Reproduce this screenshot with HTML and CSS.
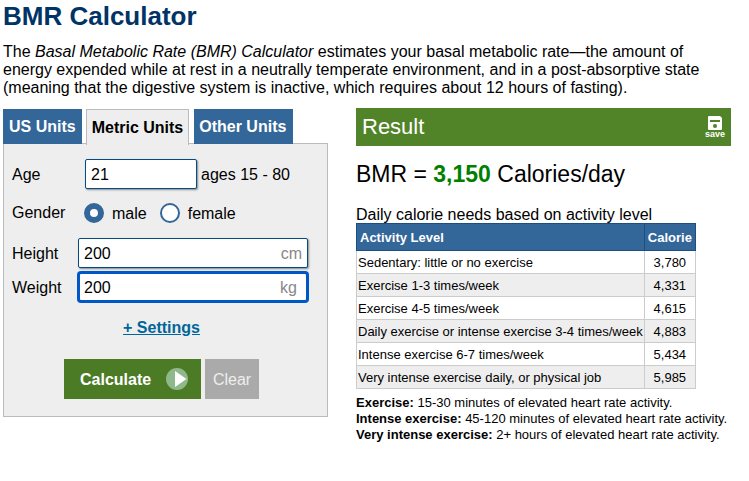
FILE: index.html
```html
<!DOCTYPE html>
<html>
<head>
    <title>BMR Calculator</title>
    <link rel="stylesheet" href="styles.css">
</head>
<body>
    <h1>BMR Calculator</h1>
    <p class="intro">The <i>Basal Metabolic Rate (BMR) Calculator</i> estimates your basal metabolic rate—the amount of energy expended while at rest in a neutrally temperate environment, and in a post-absorptive state (meaning that the digestive system is inactive, which requires about 12 hours of fasting).</p>

    <div class="columns">
        <!-- Calculator form -->
        <div class="calc">
            <div class="tabs">
                <a class="tab">US Units</a>
                <a class="tab active">Metric Units</a>
                <a class="tab">Other Units</a>
            </div>
            <div class="panel">
                <div class="row row-age">
                    <label>Age</label>
                    <div class="field field-age">21</div>
                    <span class="hint">ages 15 - 80</span>
                </div>
                <div class="row row-gender">
                    <label>Gender</label>
                    <span class="radio checked"></span><span class="radio-text">male</span>
                    <span class="radio"></span><span class="radio-text">female</span>
                </div>
                <div class="row row-height">
                    <label>Height</label>
                    <div class="field field-wide">200<span class="unit">cm</span></div>
                </div>
                <div class="row row-weight">
                    <label>Weight</label>
                    <div class="field field-wide focused">200<span class="unit">kg</span></div>
                </div>
                <div class="settings"><a>+ Settings</a></div>
                <div class="buttons">
                    <button class="btn-calc"><span>Calculate</span>
                        <svg width="22" height="22" viewBox="0 0 22 22"><circle cx="11" cy="11" r="11" fill="#8fb98a"/><path d="M9 3 L20.5 11 L9 19 Z" fill="#fff"/></svg>
                    </button>
                    <button class="btn-clear">Clear</button>
                </div>
            </div>
        </div>

        <!-- Result -->
        <div class="result">
            <div class="result-head">
                <span>Result</span>
                <div class="save">
                    <svg width="14" height="14" viewBox="0 0 14 14"><path d="M0 1 Q0 0 1 0 H12 L14 2 V13 Q14 14 13 14 H1 Q0 14 0 13 Z" fill="#fff"/><rect x="2" y="4" width="10" height="2" fill="#518428"/><circle cx="7" cy="10" r="2" fill="#518428"/></svg>
                    <span>save</span>
                </div>
            </div>
            <div class="bmr">BMR = <b>3,150</b> Calories/day</div>
            <div class="table-title">Daily calorie needs based on activity level</div>
            <table>
                <tr><th>Activity Level</th><th class="num">Calorie</th></tr>
                <tr><td>Sedentary: little or no exercise</td><td class="num">3,780</td></tr>
                <tr class="alt"><td>Exercise 1-3 times/week</td><td class="num">4,331</td></tr>
                <tr><td>Exercise 4-5 times/week</td><td class="num">4,615</td></tr>
                <tr class="alt"><td>Daily exercise or intense exercise 3-4 times/week</td><td class="num">4,883</td></tr>
                <tr><td>Intense exercise 6-7 times/week</td><td class="num">5,434</td></tr>
                <tr class="alt"><td>Very intense exercise daily, or physical job</td><td class="num">5,985</td></tr>
            </table>
            <div class="notes">
                <div><b>Exercise:</b> 15-30 minutes of elevated heart rate activity.</div>
                <div><b>Intense exercise:</b> 45-120 minutes of elevated heart rate activity.</div>
                <div><b>Very intense exercise:</b> 2+ hours of elevated heart rate activity.</div>
            </div>
        </div>
    </div>
</body>
</html>
```

FILE: styles.css
```css
body { margin: 0; padding: 0 3px; background: #fff; color: #000; font-family: "Liberation Sans", Arial, sans-serif; font-size: 16px; }

h1 { margin: 0; padding-top: 1px; font-size: 26px; line-height: 30px; color: #003366; }
.intro { width: 728px; margin: 12px 0 0; line-height: 18px; }

.columns { display: flex; gap: 28px; margin-top: 11px; }

.calc { width: 325px; flex: none; }
.tabs { display: flex; align-items: flex-start; gap: 4px; padding-top: 1px; margin-bottom: -2px; }
.tab { height: 35px; line-height: 35px; padding: 0 6px; background: #336699; color: #fff; font-weight: bold; font-size: 16px; }
.tab.active { box-sizing: border-box; height: 36px; padding: 0 5px; background: #eee; color: #000; border: 1px solid #bbb; border-bottom: 0; position: relative; z-index: 1; }
.tab:last-child { padding: 0 6px 0 5px; width: 88px; margin-left: 1px; }

.panel { box-sizing: border-box; height: 274px; padding: 15px 0 0 8px; background: #eee; border: 1px solid #bbb; }
.row { display: flex; align-items: center; }
.row label { width: 66px; flex: none; padding-top: 1px; }
.row-gender label { padding-top: 0; }
.field { box-sizing: border-box; height: 30px; line-height: 30px; padding-left: 5px; background: #fff; border: 1px solid #044b87; border-radius: 2px; box-shadow: 1px 1px 2px #888; position: relative; }
.field-age { width: 112px; margin-left: 7px; }
.hint { margin-left: 4px; padding-top: 1px; }
.row-gender { margin-top: 14px; height: 20px; }
.radio { box-sizing: border-box; width: 20px; height: 20px; border: 2px solid #336699; border-radius: 50%; background: #fff; }
.radio.checked { margin-left: 6px; border: 6px solid #336699; }
.radio + .radio-text { margin-left: 8px; padding-top: 1px; }
.radio-text + .radio { margin-left: 13px; }
.row-height { margin-top: 15px; }
.row-weight { margin-top: 4px; }
.field-wide { width: 230px; }
.field.focused { border: 2px solid #0057c8; border-radius: 3px; box-shadow: 0 0 0 1px #0057c8; padding-left: 4px; line-height: 28px; }
.unit { position: absolute; right: 5px; top: 0; color: #888; }
.focused .unit { right: 9px; }

.settings { margin-top: 16px; padding-right: 16px; text-align: center; font-weight: bold; line-height: 20px; }
.settings a { color: #006699; text-decoration: underline; }

.buttons { display: flex; gap: 4px; margin: 21px 0 0 52px; }
button { height: 40px; border: 0; padding: 1px 0 0; font-family: inherit; font-size: 16px; color: #fff; }
.btn-calc { display: flex; align-items: center; justify-content: flex-start; gap: 15px; width: 137px; padding-left: 16px; background: #4c7b25; font-weight: bold; }
.btn-calc svg { margin-top: -1px; }
.btn-clear { width: 54px; background: #aaa; color: #eee; }

.result { width: 375px; flex: none; }
.result-head { display: flex; justify-content: space-between; align-items: center; height: 38px; padding: 0 6px; background: #518428; color: #fff; font-size: 22px; }
.save { display: flex; flex-direction: column; align-items: center; font-size: 9px; font-weight: bold; line-height: 8px; }
.bmr { margin-top: 14px; font-size: 23px; line-height: 28px; }
.bmr b { color: green; }
.table-title { margin-top: 18px; line-height: 18px; height: 17px; }

table { border-collapse: collapse; font-size: 13px; width: 340px; white-space: nowrap; }
th { height: 26px; padding: 0 3px; background: #336699; color: #fff; border: 1px solid #1c4e80; text-align: left; }
td { height: 22px; padding: 0 1px; border: 1px solid #ccc; }
.alt td { background: #eee; }
th.num, td.num { width: 48px; text-align: center; padding: 0 2px; }

.notes { margin-top: 6px; font-size: 13px; line-height: 16px; }
```
